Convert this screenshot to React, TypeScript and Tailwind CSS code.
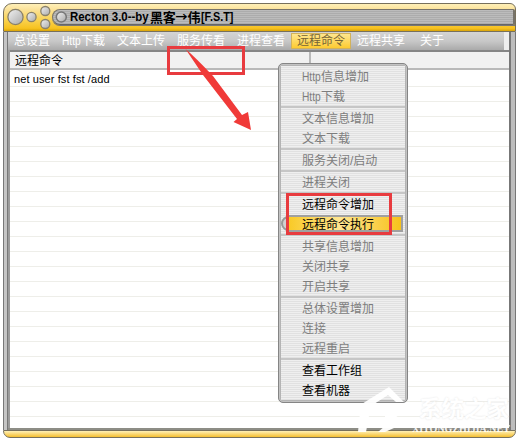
import React from 'react';

const TABS = ['总设置', 'Http下载', '文本上传', '服务传看', '进程查看', '远程命令', '远程共享', '关于'];

type Item = { label: string; state?: 'on' | 'active' };

const GROUPS: Item[][] = [
  [{ label: 'Http信息增加' }, { label: 'Http下载' }],
  [{ label: '文本信息增加' }, { label: '文本下载' }],
  [{ label: '服务关闭/启动' }],
  [{ label: '进程关闭' }],
  [{ label: '远程命令增加', state: 'on' }, { label: '远程命令执行', state: 'active' }],
  [{ label: '共享信息增加' }, { label: '关闭共享' }, { label: '开启共享' }],
  [{ label: '总体设置增加' }, { label: '连接' }, { label: '远程重启' }],
  [{ label: '查看工作组', state: 'on' }, { label: '查看机器', state: 'on' }],
];

function Label({ text }: { text: string }) {
  if (!text.startsWith('Http')) return <>{text}</>;
  return (
    <>
      <span className="inline-block w-[19px] origin-left scale-x-[0.85] font-['Liberation_Sans',sans-serif] text-[12px]">Http</span>
      {text.slice(4)}
    </>
  );
}

function TitleBar() {
  return (
    <div className="relative flex h-[29px] shrink-0 rounded-tl-[9px] rounded-tr-[6px] border border-[#77705c] bg-[linear-gradient(#fff0b8,#fbe29b_20%,#f9d458_55%,#f7c21f_90%,#d9a408)]">
      <svg className="absolute left-0 top-0" width="64" height="28" viewBox="4 4 64 28">
        <defs>
          <linearGradient id="ball" x1="0" y1="0" x2="1" y2="1">
            <stop offset="0" stopColor="#f2f2f2" />
            <stop offset="1" stopColor="#a9a9a9" />
          </linearGradient>
        </defs>
        <g fill="url(#ball)" stroke="#89816b" strokeWidth="1.3">
          <circle cx="15.5" cy="17" r="7.6" />
          <circle cx="31.5" cy="17" r="4.6" />
          <circle cx="45.3" cy="11" r="4.5" />
          <circle cx="45.3" cy="24" r="4.5" />
        </g>
      </svg>
      <div className="ml-[48px] mt-[5px] flex h-[16px] flex-1 items-center rounded-l-[9px] rounded-tr-[2px] border border-r-2 border-[#77736a] border-b-[#666] bg-[repeating-linear-gradient(#bcbcbc_0px,#bcbcbc_1px,#acacac_1px,#acacac_2px)] shadow-[0_1px_0_#777]">
        <svg width="14" height="14" viewBox="0 0 14 14" className="ml-px shrink-0">
          <circle cx="7.3" cy="7" r="5" fill="url(#ball)" stroke="#777" strokeWidth="1.5" />
        </svg>
        <div className="ml-[2px] flex h-[15px] items-center whitespace-pre text-[12px] font-bold leading-[15px] text-black">
          <span className="w-[80px] origin-left scale-x-[0.95]">Recton 3.0--by </span>
          <span className="-mt-[2px] w-[51px] font-['Noto_Sans_CJK_SC',sans-serif] text-[13px] tracking-[-0.3px]">黑客<span className="inline-block w-[12px] text-[12px]">→</span>伟</span>
          <span className="origin-left scale-x-[0.9]">[F.S.T]</span>
        </div>
      </div>
    </div>
  );
}

function MenuBar() {
  return (
    <div className="flex h-[18px] shrink-0 border-r-[5px] border-[#eeeeee] bg-[linear-gradient(#d4d4d4,#c8c8c8_50%,#aaaaaa)] text-[12px] leading-[17px] text-white">
      {TABS.map((tab) => (
        <div
          key={tab}
          className={`mt-px h-[16px] shrink-0 px-[6px] whitespace-nowrap ${
            tab === '远程命令'
              ? 'bg-[linear-gradient(#ffe896,#fdc92a)] text-[#756437] outline outline-1 -outline-offset-1 outline-[#d2b25a]'
              : ''
          } ${tab === '关于' ? 'ml-[3px]' : ''}`}
        >
          <Label text={tab} />
        </div>
      ))}
    </div>
  );
}

function CommandList() {
  return (
    <div className="relative flex flex-1 flex-col border-l-2 border-[#9b9b9b]">
      <div className="flex h-[20px] shrink-0 border-b-2 border-t-2 border-b-[#b9b9b9] border-t-[#858585] bg-[#f1f1f1]">
        <div className="w-[301px] border-r-2 border-[#b9b9b9] pl-[5px] text-[12px] leading-[18px] text-black">远程命令</div>
      </div>
      <div className="flex-1 bg-white bg-[repeating-linear-gradient(transparent_0px,transparent_14px,#eeeee9_14px,#eeeee9_15px)] bg-[position:0_2px] pl-[4px] pt-[2px] font-['Liberation_Sans',sans-serif] text-[11px] leading-[15px] tracking-[0.1px] text-black">
        net user fst fst /add
      </div>
    </div>
  );
}

function DropMenu() {
  return (
    <div className="absolute left-[278px] top-[63px] h-[340px] w-[130px] rounded-[5px] border border-[#858585] bg-[#b4b4b4] p-[2px] shadow-[inset_0_0_0_1px_#c3c3c3]">
      <div className="h-full bg-[repeating-linear-gradient(#efefef_0px,#efefef_1px,#e1e1e1_1px,#e1e1e1_2px)]">
        {GROUPS.map((group, index) => (
          <div key={index} className={index ? 'border-t-2 border-[#c6c6c6]' : ''}>
            {group.map((item) => (
              <div
                key={item.label}
                className={`relative h-[20px] pl-[21px] text-[12px] leading-[22px] whitespace-nowrap ${item.state ? 'text-black' : 'text-[#7d7d7d]'}`}
              >
                {item.state === 'active' && (
                  <>
                    <div className="absolute left-0 top-[2px] h-[15px] w-[15px] rounded-full border-2 border-[#999] bg-[#d2d2d2]" />
                    <div className="absolute left-[6px] right-[2px] top-[1px] h-[17px] border-2 border-[#a0a0a0] bg-[linear-gradient(90deg,#f9ca27,#ffe590_45%,#f7c21b)]" />
                  </>
                )}
                <span className="relative"><Label text={item.label} /></span>
              </div>
            ))}
          </div>
        ))}
      </div>
    </div>
  );
}

function Annotations() {
  return (
    <>
      <div className="absolute left-[167px] top-[46px] h-[29px] w-[78px] border-[3px] border-[#e83b3f]" />
      <div className="absolute left-[286px] top-[193px] h-[42px] w-[106px] border-[3px] border-[#e83b3f]" />
      <svg className="absolute left-[180px] top-[44px]" width="80" height="90" viewBox="180 44 80 90">
        <path d="M185.5 49 Q195 57 213 76 L242 115 L248 112 L251 130 L233.5 122 L237 119 L203 75 Z" fill="#f03a38" />
      </svg>
    </>
  );
}

function Watermark() {
  return (
    <div className="absolute left-[350px] top-[386px] h-[52px] w-[164px] text-white">
      <svg className="absolute left-0 top-0" width="60" height="48" viewBox="350 386 60 48">
        <path
          d="M357 407 L389 387 L404 402 L396 402 L388 395 L371 406 L371 409 L394 409 L400 414 L394 419 L394 428 L385 432 L378 432 L385 426 L385 416 L369 416 L366 432 L358 432 L360 412 Z"
          fill="white"
          opacity=".96"
        />
      </svg>
      <div className="absolute left-[69px] top-[13px] text-[22.5px] font-bold leading-[22px] whitespace-nowrap [text-shadow:0_0_2px_#e4e4e4]">系统之家</div>
      <div className="absolute left-[62px] top-[38px] font-['Liberation_Serif',serif] text-[10px] font-bold leading-[10px] whitespace-nowrap opacity-90">XITONGZHIJIA.NET</div>
    </div>
  );
}

export default function App() {
  return (
    <main className="relative h-[442px] w-[520px] overflow-hidden bg-white pl-[3px] pt-[3px] font-['Liberation_Sans','Noto_Sans_CJK_SC',sans-serif]">
      <div className="flex h-[435px] w-[513px] flex-col">
        <TitleBar />
        <div className="flex min-h-0 flex-1 border-x border-[#777]">
          <div className="w-[4px] shrink-0 border-r border-[#777] bg-[#c5c5c5]" />
          <div className="flex min-w-0 flex-1 flex-col">
            <MenuBar />
            <CommandList />
            <div className="h-[2px] shrink-0 bg-[#8d8d86]" />
          </div>
          <div className="w-[6px] shrink-0 border-l-2 border-[#777] bg-[#bdbdbd]" />
        </div>
        <div className="h-[8px] shrink-0 rounded-b-[7px] border border-[#77705c] bg-[linear-gradient(#fff0b6,#fbdc80_40%,#f4bf31)]" />
      </div>
      <DropMenu />
      <Annotations />
      <Watermark />
    </main>
  );
}
